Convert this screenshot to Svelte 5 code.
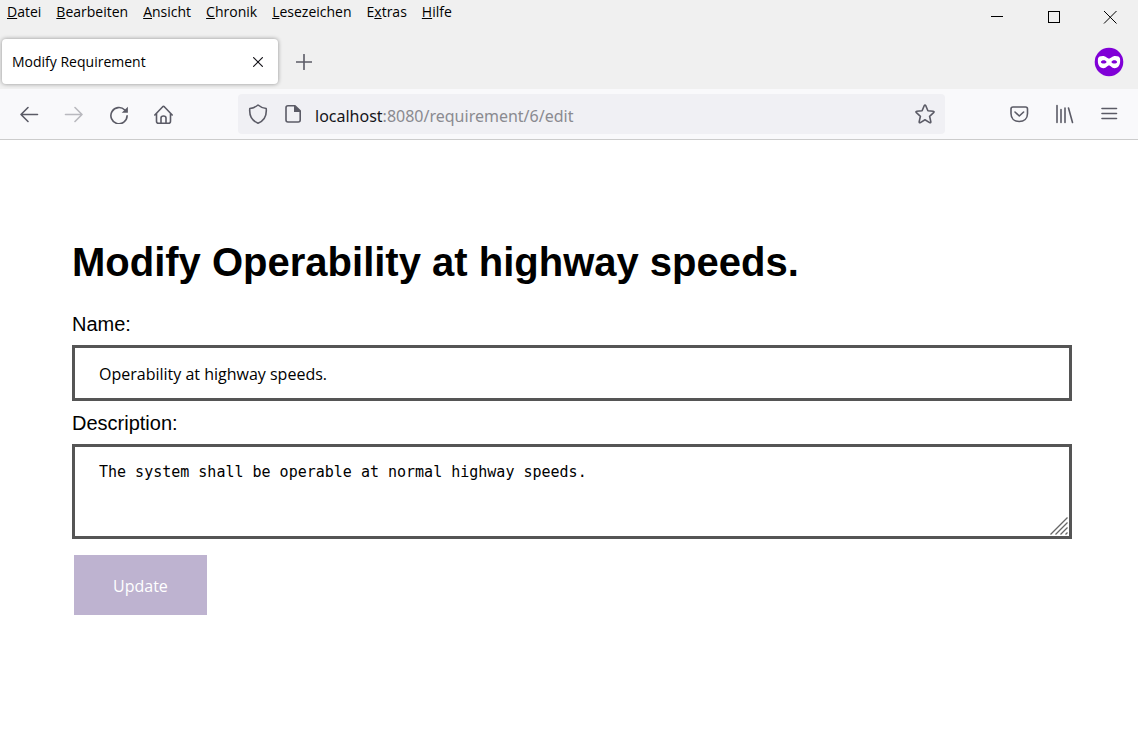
<script>
  const menus = ['Datei', 'Bearbeiten', 'Ansicht', 'Chronik', 'Lesezeichen', 'Extras', 'Hilfe'];
  const keys = [0, 0, 0, 0, 0, 1, 0];
  let name = $state('Operability at highway speeds.');
  let description = $state('The system shall be operable at normal highway speeds.');
</script>

<header class="browser">
  <div class="titlebar">
    <nav class="menu">
      {#each menus as item, i}
        <button>{item.slice(0, keys[i])}<u>{item[keys[i]]}</u>{item.slice(keys[i] + 1)}</button>
      {/each}
    </nav>
    <div class="window-controls">
      <button aria-label="Minimieren"><svg width="14" height="14" shape-rendering="crispEdges"><path d="M0 6.5H12" /></svg></button>
      <button aria-label="Maximieren"><svg width="14" height="14" shape-rendering="crispEdges"><rect x="1.5" y="1.5" width="11" height="11" /></svg></button>
      <button aria-label="Schließen"><svg width="14" height="14"><path d="M1 1L13.500 13.500M13.500 1L1 13.500" /></svg></button>
    </div>
  </div>

  <div class="tabs">
    <div class="tab">
      <span>Modify Requirement</span>
      <button aria-label="Tab schließen"><svg width="10" height="10"><path d="M.6 .6L9.4 9.4M9.4 .6L.6 9.4" /></svg></button>
    </div>
    <button class="new-tab" aria-label="Neuer Tab"><svg width="16" height="16"><path d="M8 .5V15.5M.5 8H15.5" /></svg></button>
    <svg class="private" width="30" height="30" viewBox="0 0 30 30">
      <circle cx="15" cy="15" r="14.3" fill="#8000d7" />
      <path fill="#fff" fill-rule="evenodd" d="M4 11.500C4.400 9.600 6 8.900 8.800 8.900C12 8.900 13 11.400 15 11.400S18 8.900 21.200 8.900C24 8.900 25.600 9.600 26 11.500C26.800 17.500 24.500 21.200 20.500 21.200C17.500 21.200 16.800 18.600 15 18.600S12.500 21.200 9.500 21.200C5.500 21.200 3.200 17.500 4 11.500ZM6.800 15C7.500 17 11.800 17 12.600 15C11.800 12.800 7.600 12.800 6.800 15ZM23.200 15C22.400 12.800 18.200 12.800 17.400 15C18.200 17 22.500 17 23.200 15Z" />
    </svg>
  </div>

  <div class="toolbar">
    <button aria-label="Zurück"><svg width="20" height="20"><path d="M18.500 10.500H2M9 3.500L2 10.500L9 17.500" /></svg></button>
    <button aria-label="Vor" disabled><svg width="20" height="20"><path d="M1.500 10.500H18M11 3.500L18 10.500L11 17.500" /></svg></button>
    <button aria-label="Neu laden"><svg width="20" height="20"><path d="M18.100 11.800A8.100 8.100 0 1 1 15.800 6" /><path class="solid" d="M18.900 2.800V8.800H12.700Z" /></svg></button>
    <button aria-label="Startseite"><svg width="20" height="20"><path d="M.8 11L8.700 2.700Q9.500 2 10.300 2.700L18.200 11M2.500 9.500V17.200Q2.500 19.200 4.500 19.200H14.500Q16.500 19.200 16.500 17.200V9.500M7 19V14Q7 12 9.500 12T12 14V19" /></svg></button>

    <div class="url-bar">
      <svg class="shield" width="20" height="20"><path d="M10 1Q13.500 4 18.200 4.500C18.800 10.500 16.500 16.500 10 19.200C3.500 16.500 1.200 10.500 1.800 4.500Q6.500 4 10 1Z" /></svg>
      <svg width="20" height="20"><path d="M5 1.800H12L17.200 6.800V16Q17.200 18 15.200 18H5Q3 18 3 16V3.800Q3 1.800 5 1.800Z" /><path class="solid" d="M11 1V8H17.800Z" /></svg>
      <p>localhost<span>:8080/requirement/6/edit</span></p>
      <button aria-label="Lesezeichen hinzufügen"><svg width="20" height="20"><path d="M9.200 1.700Q10 .4 10.800 1.700L12.900 6.700L18.200 7.200Q19.700 7.500 18.600 8.700L14.600 12.300L15.800 17.600Q16 19.200 14.600 18.600L10 15.800L5.400 18.600Q4 19.200 4.200 17.600L5.400 12.300L1.400 8.700Q.3 7.500 1.800 7.200L7.100 6.700Z" /></svg></button>
    </div>

    <button aria-label="In Pocket speichern"><svg width="20" height="20"><path d="M3 3H15.500Q17.500 3 17.500 5V9.500C17.500 14.500 14 17.500 9.200 17.500S1 14.500 1 9.500V5Q1 3 3 3ZM5 8L9.300 12L13.600 8" /></svg></button>
    <button aria-label="Bibliothek"><svg width="20" height="20"><path d="M2 1.500V18.500M6 5.500V18.500M10 4V18.500M13.500 4L17.500 18.500" /></svg></button>
    <button aria-label="Menü"><svg width="20" height="20"><path d="M2 4.500H16.500M2 9.500H16.500M2 14.500H16.500" /></svg></button>
  </div>
</header>

<main>
  <h1>Modify Operability at highway speeds.</h1>
  <form onsubmit={(event) => event.preventDefault()}>
    <label for="name">Name:</label>
    <input id="name" type="text" bind:value={name} />
    <label for="description">Description:</label>
    <div class="area">
      <textarea id="description" spellcheck="false" bind:value={description}></textarea>
      <svg class="grip" width="18" height="18"><path d="M0.500 17.500L17.500 .5M5.500 17.500L17.500 5.500M10.500 17.500L17.500 10.500M15.500 17.500L17.500 15.500" /></svg>
    </div>
    <button class="update">Update</button>
  </form>
</main>

<style>
  :global(body) {
    margin: 0;
    background: #fff;
    color: #000;
  }

  button {
    display: flex;
    align-items: center;
    justify-content: center;
    margin: 0;
    padding: 0;
    border: 0;
    background: none;
    color: inherit;
    font: inherit;
  }

  svg {
    flex: none;
    display: block;
    fill: none;
    stroke: #5b5b66;
    stroke-width: 1.600;
    stroke-linecap: round;
    stroke-linejoin: round;
  }

  .solid {
    fill: #5b5b66;
    stroke-width: 0;
  }

  .browser {
    background: #f0f0f0;
    font-family: "Open Sans", sans-serif;
    font-size: 14px;
  }

  .titlebar {
    display: flex;
    justify-content: space-between;
    height: 38px;
  }

  .menu {
    display: flex;
    gap: 15px;
    height: 24px;
    padding-left: 7px;
  }

  .menu button {
    display: block;
    line-height: 24px;
  }

  .window-controls {
    display: flex;
    height: 34px;
  }

  .window-controls button {
    width: 56px;
  }

  .window-controls svg {
    stroke: #000;
    stroke-width: 1;
    stroke-linecap: butt;
  }

  .tabs {
    display: flex;
    align-items: center;
    height: 47px;
    padding: 0 14px 4px 2px;
  }

  .tab {
    display: flex;
    align-items: center;
    justify-content: space-between;
    box-sizing: border-box;
    width: 276px;
    height: 45px;
    padding: 0 15px 0 10px;
    border-radius: 4px;
    background: #fff;
    box-shadow: 0 0 4px rgba(0, 0, 0, 0.4);
    line-height: 20px;
  }

  .tab svg {
    stroke: #15141a;
    stroke-width: 1.200;
  }

  .new-tab {
    width: 52px;
    height: 40px;
  }

  .private {
    margin-left: auto;
    stroke: none;
  }

  .toolbar {
    display: flex;
    align-items: center;
    height: 50px;
    padding: 0 6px;
    border-bottom: 1px solid #ccc;
    background: #f9f9fb;
  }

  .toolbar > button {
    width: 45px;
    height: 40px;
  }

  .toolbar > button:disabled {
    opacity: 0.4;
  }

  .url-bar {
    display: flex;
    flex: 1;
    align-items: center;
    gap: 12px;
    min-width: 0;
    height: 40px;
    margin: 0 52px;
    padding: 0 10px;
    border-radius: 4px;
    background: #f0f0f4;
  }

  .shield {
    margin-right: 3px;
  }

  .url-bar p {
    flex: 1;
    margin: 0;
    padding-top: 3px;
    color: #15141a;
    font-family: "Noto Sans", sans-serif;
    font-size: 16px;
    line-height: 24px;
  }

  .url-bar span {
    color: #8a8a90;
  }

  main {
    padding: 98px 66px 40px 72px;
    font-family: "Liberation Sans", Arial, sans-serif;
  }

  h1 {
    margin: 0 0 27px;
    font-size: 40px;
    line-height: 48px;
  }

  form {
    display: flex;
    flex-direction: column;
    align-items: stretch;
  }

  label {
    padding-bottom: 9px;
    font-size: 20px;
    line-height: 23px;
  }

  input,
  textarea {
    display: block;
    box-sizing: border-box;
    width: 100%;
    margin: 0;
    border: 3px solid #555;
    border-radius: 0;
    outline: 0;
    background: #fff;
    color: #000;
  }

  input {
    height: 56px;
    margin-bottom: 11px;
    padding: 2px 24px 0;
    font-family: "Open Sans", sans-serif;
    font-size: 16px;
  }

  .area {
    position: relative;
    margin-bottom: 16px;
  }

  textarea {
    height: 95px;
    padding: 16px 24px;
    font-family: "DejaVu Sans Mono", monospace;
    font-size: 15px;
    line-height: 18px;
    resize: vertical;
  }

  textarea::-webkit-resizer {
    background: transparent;
  }

  .grip {
    position: absolute;
    right: 4px;
    bottom: 4px;
    stroke: #666;
    stroke-width: 1.300;
    stroke-linecap: butt;
    pointer-events: none;
  }

  .update {
    align-self: flex-start;
    height: 60px;
    margin-left: 2px;
    padding: 2px 39px 0;
    background: #beb3d0;
    color: #fff;
    font-family: "Open Sans", sans-serif;
    font-size: 16px;
  }
</style>
